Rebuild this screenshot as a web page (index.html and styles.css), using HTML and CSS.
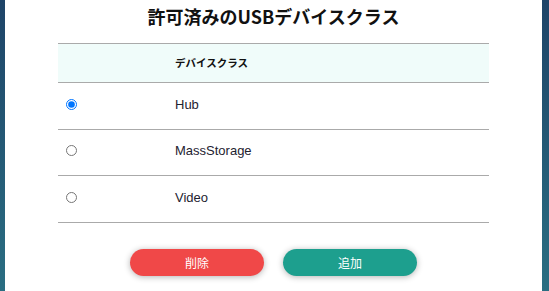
FILE: index.html
```html
<!DOCTYPE html>
<html lang="ja">
<head>
<meta charset="utf-8">
<title>許可済みのUSBデバイスクラス</title>
<link rel="stylesheet" href="styles.css">
</head>
<body>
<div class="panel">
  <h1 class="title">許可済みのUSBデバイスクラス</h1>
  <div class="table">
    <div class="row head">
      <div class="cell sel"></div>
      <div class="cell name">デバイスクラス</div>
    </div>
    <label class="row">
      <div class="cell sel"><input type="radio" name="cls" checked></div>
      <div class="cell name">Hub</div>
    </label>
    <label class="row">
      <div class="cell sel"><input type="radio" name="cls"></div>
      <div class="cell name">MassStorage</div>
    </label>
    <label class="row">
      <div class="cell sel"><input type="radio" name="cls"></div>
      <div class="cell name">Video</div>
    </label>
  </div>
  <div class="actions">
    <button class="btn btn-delete">削除</button>
    <button class="btn btn-add">追加</button>
  </div>
</div>
</body>
</html>
```

FILE: styles.css
```css
html, body {
  margin: 0;
  padding: 0;
  height: 100%;
  overflow: hidden;
}
body {
  background: linear-gradient(180deg, #1e4468 0%, #2a6e82 100%);
  font-family: "Liberation Sans", Arial, "Noto Sans CJK JP", sans-serif;
}
.panel {
  margin-left: 5px;
  width: 537px;
  height: 100%;
  background: #ffffff;
  padding-top: 3px;
  box-sizing: border-box;
}
.title {
  margin: 0;
  font-family: "Noto Sans CJK JP", sans-serif;
  font-size: 18px;
  line-height: 26px;
  font-weight: 700;
  color: #111;
  text-align: center;
}
.table {
  width: 431px;
  margin: 14px auto 0;
  border-top: 1px solid #aaaaaa;
}
.row {
  display: flex;
  align-items: center;
  padding-bottom: 3px;
  box-sizing: content-box;
  border-bottom: 1px solid #aaaaaa;
  height: 42.67px;
}
.row.head {
  background: #f0fcfa;
  height: 36px;
  padding-bottom: 2px;
}
.cell.sel {
  width: 117px;
  padding-left: 8px;
  box-sizing: border-box;
  display: flex;
  align-items: center;
}
.cell.sel input {
  margin: 0;
  width: 11px;
  height: 11px;
}
.cell.name {
  font-size: 13px;
  color: #1e2230;
}
.head .cell.name {
  font-family: "Noto Sans CJK JP", sans-serif;
  font-size: 10.5px;
  font-weight: 700;
  color: #111;
}
.actions {
  display: flex;
  justify-content: center;
  gap: 19px;
  margin-top: 26px;
}
.btn {
  width: 134px;
  height: 27px;
  border: none;
  border-radius: 14px;
  color: #fff;
  font-family: "Noto Sans CJK JP", sans-serif;
  font-size: 12px;
  padding: 0;
  box-shadow: 0 1px 6px rgba(0, 0, 0, 0.3);
}
.btn-delete {
  background: #f04848;
}
.btn-add {
  background: #1d9f8e;
}
```
